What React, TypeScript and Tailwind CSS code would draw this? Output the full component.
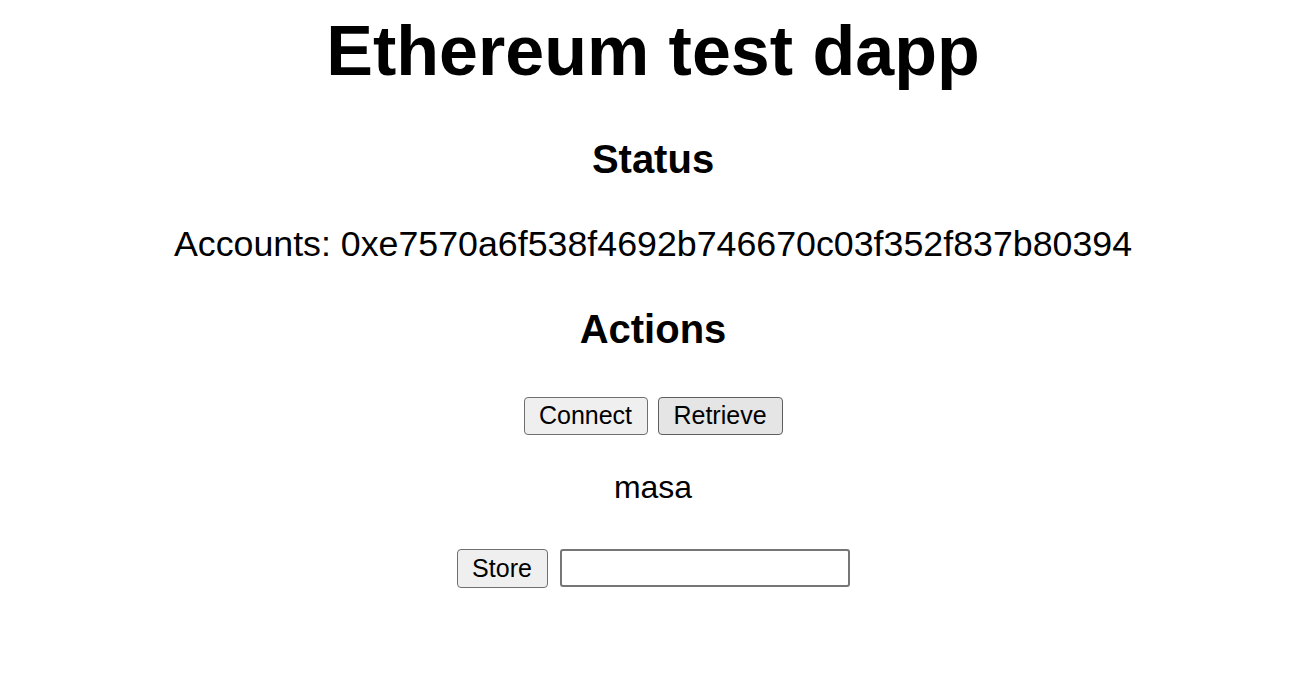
import React, { useState } from 'react';

const App: React.FC = () => {
  const [value, setValue] = useState('');

  return (
    <div className="min-h-screen bg-white text-black font-['Liberation_Sans',Arial,sans-serif] flex flex-col items-center pl-[10px]">
      <h1 className="mt-[16px] text-[70px] leading-none font-bold">Ethereum test dapp</h1>

      <h2 className="mt-[53px] text-[40px] leading-none font-bold">Status</h2>
      <p className="mt-[48px] text-[35.75px] leading-none">
        Accounts: 0xe7570a6f538f4692b746670c03f352f837b80394
      </p>

      <h2 className="mt-[46px] text-[40px] leading-none font-bold">Actions</h2>
      <div className="mt-[48px] flex gap-[10px]">
        <button className="h-[38px] w-[124px] bg-[#efefef] border border-[#6f6f6f] rounded-[4px] text-[25px] leading-none">
          Connect
        </button>
        <button className="h-[38px] w-[125px] bg-[#e5e5e5] border border-[#5f5f5f] rounded-[4px] text-[25px] leading-none">
          Retrieve
        </button>
      </div>

      <p className="mt-[36px] text-[32px] leading-none">masa</p>

      <div className="mt-[46px] flex gap-[12px]">
        <button className="h-[39px] w-[91px] bg-[#efefef] border border-[#6f6f6f] rounded-[4px] text-[25px] leading-none">
          Store
        </button>
        <input
          type="text"
          value={value}
          onChange={(e) => setValue(e.target.value)}
          className="h-[38px] w-[290px] border-2 border-[#767676] rounded-[3px] bg-white px-2 text-[25px] outline-none"
        />
      </div>
    </div>
  );
};

export default App;
